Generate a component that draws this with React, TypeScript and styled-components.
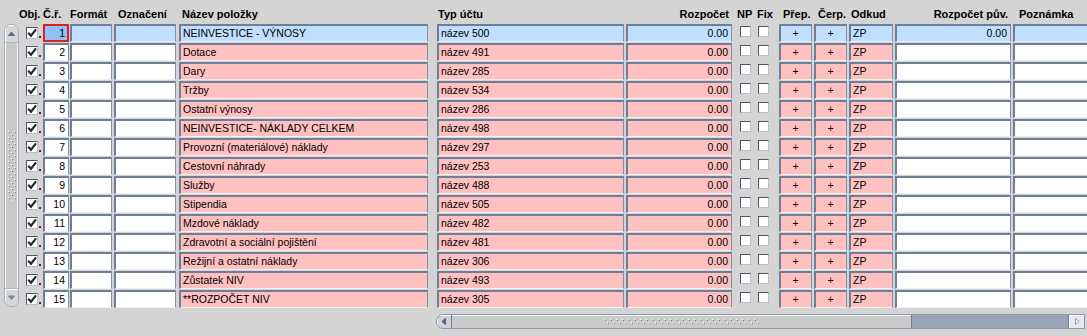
import React from 'react';
import styled, { createGlobalStyle } from 'styled-components';

const GlobalStyle = createGlobalStyle`
  html, body { margin: 0; padding: 0; background: #d4d4d4; }
  body { font-family: "Liberation Sans", Arial, sans-serif; }
`;

type Tone = 'blue' | 'pink' | 'white' | 'focus';
const toneBg: Record<Tone, string> = {
  blue: '#c0dffe',
  pink: '#ffc0c0',
  white: '#ffffff',
  focus: '#8dc1f7',
};

const Screen = styled.div`
  display: flex;
  width: 1087px;
  height: 336px;
  overflow: hidden;
  background: #d4d4d4;
  color: #000;
`;

const FrozenPane = styled.div`
  flex: none;
  width: 417px;
  display: flex;
  flex-direction: column;
`;

const ScrollPane = styled.div`
  flex: none;
  width: 651px;
  overflow: hidden;
  display: flex;
  flex-direction: column;
`;

const HeaderRow = styled.div`
  display: flex;
  height: 24px;
  box-sizing: border-box;
  padding-top: 8px;
  font-weight: 700;
  font-size: 11px;
  line-height: 13px;
  white-space: nowrap;
`;

const HeadLabel = styled.div<{ $w?: number; $gap?: number; $align?: 'left' | 'right' }>`
  flex: none;
  width: ${(p) => (p.$w ? `${p.$w}px` : 'auto')};
  margin-left: ${(p) => p.$gap ?? 0}px;
  text-align: ${(p) => p.$align ?? 'left'};
`;

const Row = styled.div`
  display: flex;
  align-items: flex-start;
  height: 18px;
  margin-bottom: 1px;
  flex: none;
`;

const Field = styled.div<{ $w: number; $gap?: number; $tone: Tone; $align?: 'left' | 'right' | 'center' }>`
  flex: none;
  box-sizing: border-box;
  width: ${(p) => p.$w}px;
  height: 18px;
  margin-left: ${(p) => p.$gap ?? 0}px;
  background: ${(p) => toneBg[p.$tone]};
  border-style: solid;
  border-width: ${(p) => (p.$tone === 'focus' ? '2px' : '2px 1px 1px 2px')};
  border-color: ${(p) =>
    p.$tone === 'focus' ? '#e31c1c' : '#6f7e98 #8391a7 #eef0f3 #6f7e98'};
  padding: ${(p) => (p.$tone === 'focus' ? '0 2px 0 2px' : '0 3px 0 2px')};
  font-size: 10.5px;
  line-height: ${(p) => (p.$tone === 'focus' ? '14px' : '15px')};
  text-align: ${(p) => p.$align ?? 'left'};
  white-space: nowrap;
  overflow: hidden;
`;

const CheckBox = styled.div<{ $size: number; $gap: number; $top: number }>`
  flex: none;
  box-sizing: border-box;
  width: ${(p) => p.$size}px;
  height: ${(p) => p.$size}px;
  margin-left: ${(p) => p.$gap}px;
  margin-top: ${(p) => p.$top}px;
  background: #ffffff;
  border-style: solid;
  border-width: 1px;
  border-color: #4e5666 #b9bec7 #b9bec7 #4e5666;
  display: flex;
  align-items: center;
  justify-content: center;
`;

const Dot = styled.div`
  flex: none;
  width: 2px;
  height: 2px;
  margin: 12px 0 0 1px;
  background: #7a1020;
`;

const VScroll = styled.div`
  flex: none;
  box-sizing: border-box;
  width: 15px;
  height: 283px;
  margin: 24px 0 0 4px;
  border: 1px solid #a7afbe;
  border-radius: 7px;
  background: #c9c9c9;
  box-shadow: inset 1px 0 0 #ffffff, inset -1px 0 0 #f2f2f2;
  display: flex;
  flex-direction: column;
  overflow: hidden;
`;

const VButton = styled.div<{ $end: 'top' | 'bottom' }>`
  flex: none;
  height: 17px;
  display: flex;
  align-items: center;
  justify-content: center;
  background: #d6d6d6;
  border-${(p) => (p.$end === 'top' ? 'bottom' : 'top')}: 1px solid #b3b9c4;
  box-shadow: inset 1px 1px 0 #ffffff;
`;

const VTrack = styled.div`
  flex: 1;
  display: flex;
  align-items: center;
  justify-content: center;
`;

const HScroll = styled.div`
  flex: none;
  box-sizing: border-box;
  display: flex;
  width: 649px;
  height: 15px;
  margin-top: 5px;
  border: 1px solid #8d99ad;
  border-radius: 7px 0 0 7px;
  background: #99a5b8;
  overflow: hidden;
`;

const HButton = styled.div<{ $side: 'left' | 'right' }>`
  flex: none;
  width: ${(p) => (p.$side === 'left' ? 14 : 15)}px;
  display: flex;
  align-items: center;
  justify-content: center;
  background: ${(p) => (p.$side === 'left' ? '#d2d2d2' : '#e6e8ec')};
  border-${(p) => (p.$side === 'left' ? 'right' : 'left')}: 1px solid #6f7e98;
  box-shadow: inset 1px 1px 0 #ffffff;
`;

const HThumb = styled.div`
  flex: none;
  width: 459px;
  display: flex;
  align-items: center;
  justify-content: center;
  background: #cacaca;
  border-right: 1px solid #6f7e98;
  box-shadow: inset 0 1px 0 #f4f4f4;
`;

const Check = () => (
  <svg width="10" height="10" viewBox="0 0 10 10">
    <path d="M1.2 4.8 L4 7.8 L9 1.4" fill="none" stroke="#1f2a3a" strokeWidth="2.2" strokeLinejoin="miter" />
  </svg>
);

const Grip = ({ w, h, id }: { w: number; h: number; id: string }) => (
  <svg width={w} height={h}>
    <defs>
      <pattern id={id} width="6" height="6" patternUnits="userSpaceOnUse">
        <rect x="0" y="0" width="1" height="1" fill="#ffffff" />
        <rect x="1" y="1" width="1" height="1" fill="#8c8c8c" />
        <rect x="3" y="3" width="1" height="1" fill="#ffffff" />
        <rect x="4" y="4" width="1" height="1" fill="#8c8c8c" />
      </pattern>
    </defs>
    <rect width={w} height={h} fill={`url(#${id})`} />
  </svg>
);

const Arrow = ({ dir, color, outline }: { dir: 'up' | 'down' | 'left' | 'right'; color: string; outline?: boolean }) => {
  const pts: Record<string, string> = {
    up: '0.5,4.5 3.5,1 6.5,4.5',
    down: '0.5,1 3.5,4.5 6.5,1',
    left: '4.5,0.5 1,3.5 4.5,6.5',
    right: '1.5,0.5 5,3.5 1.5,6.5',
  };
  const horizontal = dir === 'left' || dir === 'right';
  return (
    <svg width={horizontal ? 6 : 7} height={horizontal ? 7 : 6} viewBox={horizontal ? '0 0 6 7' : '0 0 7 6'}>
      <polygon
        points={pts[dir]}
        fill={outline ? '#ffffff' : color}
        stroke={color}
        strokeWidth="1"
      />
    </svg>
  );
};

const rows: [string, string][] = [
  ['NEINVESTICE - VÝNOSY', 'název 500'],
  ['Dotace', 'název 491'],
  ['Dary', 'název 285'],
  ['Tržby', 'název 534'],
  ['Ostatní výnosy', 'název 286'],
  ['NEINVESTICE- NÁKLADY CELKEM', 'název 498'],
  ['Provozní (materiálové) náklady', 'název 297'],
  ['Cestovní náhrady', 'název 253'],
  ['Služby', 'název 488'],
  ['Stipendia', 'název 505'],
  ['Mzdové náklady', 'název 482'],
  ['Zdravotní a sociální pojištění', 'název 481'],
  ['Režijní a ostatní náklady', 'název 306'],
  ['Zůstatek NIV', 'název 493'],
  ['**ROZPOČET NIV', 'název 305'],
];

export default function App() {
  return (
    <>
      <GlobalStyle />
      <Screen>
        <VScroll>
          <VButton $end="top">
            <Arrow dir="up" color="#5b6d8d" />
          </VButton>
          <VTrack>
            <Grip w={8} h={70} id="vgrip" />
          </VTrack>
          <VButton $end="bottom">
            <Arrow dir="down" color="#7a8aa6" />
          </VButton>
        </VScroll>

        <FrozenPane>
          <HeaderRow>
            <HeadLabel $w={24}>Obj.</HeadLabel>
            <HeadLabel $w={27}>Č.ř.</HeadLabel>
            <HeadLabel $w={48}>Formát</HeadLabel>
            <HeadLabel $w={64}>Označení</HeadLabel>
            <HeadLabel>Název položky</HeadLabel>
          </HeaderRow>
          {rows.map(([name], i) => {
            const first = i === 0;
            const tone: Tone = first ? 'blue' : 'pink';
            const plain: Tone = first ? 'blue' : 'white';
            return (
              <Row key={i}>
                <CheckBox $size={12} $gap={7} $top={3}>
                  <Check />
                </CheckBox>
                <Dot />
                <Field $w={26} $gap={2} $tone={first ? 'focus' : 'white'} $align="right">
                  {i + 1}
                </Field>
                <Field $w={42} $gap={1} $tone={plain} />
                <Field $w={62} $gap={2} $tone={plain} />
                <Field $w={249} $gap={3} $tone={tone}>
                  {name}
                </Field>
              </Row>
            );
          })}
        </FrozenPane>

        <ScrollPane>
          <HeaderRow>
            <HeadLabel $w={188} $gap={2}>Typ účtu</HeadLabel>
            <HeadLabel $w={103} $align="right">Rozpočet</HeadLabel>
            <HeadLabel $w={20} $gap={8}>NP</HeadLabel>
            <HeadLabel $w={26}>Fix</HeadLabel>
            <HeadLabel $w={35}>Přep.</HeadLabel>
            <HeadLabel $w={33}>Čerp.</HeadLabel>
            <HeadLabel $w={40}>Odkud</HeadLabel>
            <HeadLabel $w={117} $align="right">Rozpočet pův.</HeadLabel>
            <HeadLabel $gap={11}>Poznámka</HeadLabel>
          </HeaderRow>
          {rows.map(([, typ], i) => {
            const first = i === 0;
            const tone: Tone = first ? 'blue' : 'pink';
            const plain: Tone = first ? 'blue' : 'white';
            return (
              <Row key={i}>
                <Field $w={187} $gap={1} $tone={tone}>
                  {typ}
                </Field>
                <Field $w={106} $gap={2} $tone={tone} $align="right">
                  0.00
                </Field>
                <CheckBox $size={11} $gap={8} $top={2} />
                <CheckBox $size={11} $gap={7} $top={2} />
                <Field $w={33} $gap={10} $tone={tone} $align="center">
                  +
                </Field>
                <Field $w={33} $gap={2} $tone={tone} $align="center">
                  +
                </Field>
                <Field $w={44} $gap={2} $tone={tone}>
                  ZP
                </Field>
                <Field $w={116} $gap={2} $tone={plain} $align="right">
                  {first ? '0.00' : ''}
                </Field>
                <Field $w={120} $gap={2} $tone={plain} />
              </Row>
            );
          })}
          <HScroll>
            <HButton $side="left">
              <Arrow dir="left" color="#4f6284" />
            </HButton>
            <HThumb>
              <Grip w={156} h={6} id="hgrip" />
            </HThumb>
            <div style={{ flex: 1 }} />
            <HButton $side="right">
              <Arrow dir="right" color="#8d99ad" outline />
            </HButton>
          </HScroll>
        </ScrollPane>
      </Screen>
    </>
  );
}
